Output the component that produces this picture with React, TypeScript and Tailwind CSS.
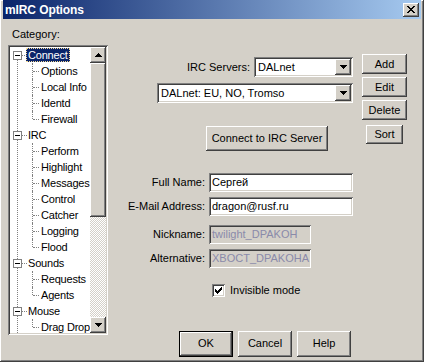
import type { ReactNode } from 'react';

const raised =
  'shadow-[inset_-1px_-1px_#404040,inset_1px_1px_#ffffff,inset_-2px_-2px_#808080,inset_2px_2px_#d4d0c8]';
const sunken =
  'shadow-[inset_1px_1px_#808080,inset_-1px_-1px_#ffffff,inset_2px_2px_#404040,inset_-2px_-2px_#d4d0c8]';

interface TreeNode {
  label: string;
  children: string[];
}

const tree: TreeNode[] = [
  { label: 'Connect', children: ['Options', 'Local Info', 'Identd', 'Firewall'] },
  {
    label: 'IRC',
    children: ['Perform', 'Highlight', 'Messages', 'Control', 'Catcher', 'Logging', 'Flood'],
  },
  { label: 'Sounds', children: ['Requests', 'Agents'] },
  { label: 'Mouse', children: ['Drag Drop'] },
];

function ArrowDown() {
  return (
    <svg width="7" height="4" shapeRendering="crispEdges">
      <path d="M0 0h7v1H0zM1 1h5v1H1zM2 2h3v1H2zM3 3h1v1H3z" fill="#000" />
    </svg>
  );
}

function ArrowUp() {
  return (
    <svg width="7" height="4" shapeRendering="crispEdges">
      <path d="M3 0h1v1H3zM2 1h3v1H2zM1 2h5v1H1zM0 3h7v1H0z" fill="#000" />
    </svg>
  );
}

function Button({
  children,
  className = '',
  isDefault = false,
}: {
  children: ReactNode;
  className?: string;
  isDefault?: boolean;
}) {
  if (isDefault) {
    return (
      <div className={`border border-black flex ${className}`}>
        <div className={`flex-1 flex items-center justify-center bg-[#d4d0c8] ${raised}`}>
          {children}
        </div>
      </div>
    );
  }
  return (
    <div className={`flex items-center justify-center bg-[#d4d0c8] ${raised} ${className}`}>
      {children}
    </div>
  );
}

function Select({ value, className = '' }: { value: string; className?: string }) {
  return (
    <div className={`flex items-stretch bg-white p-[2px] h-[20px] ${sunken} ${className}`}>
      <span className="flex-1 pl-[2px] leading-[16px] truncate">{value}</span>
      <span className={`w-[16px] flex items-center justify-center bg-[#d4d0c8] ${raised}`}>
        <ArrowDown />
      </span>
    </div>
  );
}

function Field({ value, disabled = false }: { value: string; disabled?: boolean }) {
  return (
    <div
      className={`h-[19px] pl-[3px] leading-[19px] truncate ${sunken} ${
        disabled ? 'bg-[#d4d0c8] text-[#8a8aaa]' : 'bg-white'
      }`}
    >
      {value}
    </div>
  );
}

function MinusBox() {
  return (
    <span className="absolute left-[3px] top-[4px] w-[9px] h-[9px] border border-[#808080] bg-white flex items-center justify-center">
      <span className="w-[5px] h-px bg-black" />
    </span>
  );
}

function CategoryTree() {
  return (
    <div className={`relative h-[290px] bg-white p-[2px] flex ${sunken}`}>
      <div className="relative flex-1 overflow-hidden tracking-[-0.2px]">
        {/* line joining the root nodes */}
        <span className="absolute left-[7px] top-[8px] bottom-0 border-l border-dotted border-[#808080]" />
        {tree.map((node, ni) => (
          <div key={node.label}>
            <div className="relative h-[16px] flex items-center">
              <span className="absolute left-[12px] top-[8px] w-[5px] border-t border-dotted border-[#808080]" />
              <MinusBox />
              {ni === 0 ? (
                <span className="ml-[16px] h-[14px] px-[1px] bg-[#0a246a] text-white border border-dotted border-[#f5db95] leading-[12px] whitespace-nowrap">
                  {node.label}
                </span>
              ) : (
                <span className="ml-[17px] leading-[14px] px-[1px]">{node.label}</span>
              )}
            </div>
            {node.children.map((child, ci) => {
              const last = ci === node.children.length - 1;
              return (
                <div key={child} className="relative h-[16px] flex items-center">
                  <span
                    className={`absolute left-[22px] top-0 border-l border-dotted border-[#808080] ${
                      last ? 'h-[8px]' : 'h-[16px]'
                    }`}
                  />
                  <span className="absolute left-[23px] top-[8px] w-[6px] border-t border-dotted border-[#808080]" />
                  <span className="ml-[31px] whitespace-nowrap">{child}</span>
                </div>
              );
            })}
          </div>
        ))}
      </div>
      {/* scrollbar */}
      <div className="w-[16px] flex flex-col">
        <div className={`h-[16px] flex items-center justify-center bg-[#d4d0c8] ${raised}`}>
          <ArrowUp />
        </div>
        <div className={`h-[154px] bg-[#d4d0c8] ${raised}`} />
        <div className="flex-1 bg-[repeating-conic-gradient(#ffffff_0_25%,#d4d0c8_0_50%)] bg-[length:2px_2px]" />
        <div className={`h-[16px] flex items-center justify-center bg-[#d4d0c8] ${raised}`}>
          <ArrowDown />
        </div>
      </div>
    </div>
  );
}

function CheckMark() {
  return (
    <svg width="7" height="7" shapeRendering="crispEdges">
      <path
        d="M6 0h1v1H6zM5 1h2v1H5zM0 2h1v1H0zM4 2h3v1H4zM0 3h2v1H0zM3 3h3v1H3zM0 4h5v1H0zM1 5h3v1H1zM2 6h1v1H2z"
        fill="#000"
      />
    </svg>
  );
}

function CloseGlyph() {
  return (
    <svg width="8" height="7" shapeRendering="crispEdges">
      <path
        d="M0 0h2v1H0zM6 0h2v1H6zM1 1h2v1H1zM5 1h2v1H5zM2 2h4v1H2zM3 3h2v1H3zM2 4h4v1H2zM1 5h2v1H1zM5 5h2v1H5zM0 6h2v1H0zM6 6h2v1H6z"
        fill="#000"
      />
    </svg>
  );
}

export default function App() {
  return (
    <div
      className={`w-[424px] h-[362px] bg-[#d4d0c8] px-[3px] pb-[3px] flex flex-col text-[11px] text-black font-['Liberation_Sans',Arial,sans-serif] ${raised}`}
    >
      {/* title bar */}
      <div className="h-[19px] flex items-center bg-[linear-gradient(90deg,#0a246a,#a6caf0)]">
        <span className="ml-[2px] font-bold text-white text-[12px] tracking-[-0.1px]">mIRC Options</span>
        <div className={`ml-auto mr-[2px] w-[16px] h-[14px] flex items-center justify-center bg-[#d4d0c8] ${raised}`}>
          <CloseGlyph />
        </div>
      </div>

      <div className="flex-1 flex">
        {/* left: category tree */}
        <div className="w-[105px] pl-[5px]">
          <div className="pl-[4px] pt-[9px] h-[22px] leading-[13px]">Category:</div>
          <div className="mt-[4px]">
            <CategoryTree />
          </div>
        </div>

        {/* right: settings */}
        <div className="flex">
          <div className="w-[245px] flex flex-col">
            <div className="mt-[38px] flex items-center justify-end gap-[4px]">
              <span>IRC Servers:</span>
              <Select value="DALnet" className="w-[99px]" />
            </div>
            <Select value="DALnet: EU, NO, Tromso" className="mt-[6px] w-[196px] self-end" />

            <Button className="mt-[23px] ml-[98px] w-[122px] h-[25px]">Connect to IRC Server</Button>

            <div className="mt-[22px] flex items-center">
              <span className="w-[97px] text-right">Full Name:</span>
              <div className="ml-[4px] w-[144px]">
                <Field value="Сергей" />
              </div>
            </div>
            <div className="mt-[5px] flex items-center">
              <span className="w-[97px] text-right">E-Mail Address:</span>
              <div className="ml-[4px] w-[144px]">
                <Field value="dragon@rusf.ru" />
              </div>
            </div>
            <div className="mt-[9px] flex items-center">
              <span className="w-[97px] text-right">Nickname:</span>
              <div className="ml-[4px] w-[102px]">
                <Field value="twilight_DPAKOH" disabled />
              </div>
            </div>
            <div className="mt-[5px] flex items-center">
              <span className="w-[97px] text-right">Alternative:</span>
              <div className="ml-[4px] w-[102px]">
                <Field value="XBOCT_DPAKOHA" disabled />
              </div>
            </div>

            <div className="mt-[14px] ml-[104px] flex items-center gap-[5px]">
              <span className={`w-[13px] h-[13px] bg-white flex items-center justify-center ${sunken}`}>
                <CheckMark />
              </span>
              <span>Invisible mode</span>
            </div>

            <div className="mt-[32px] ml-[71px] flex gap-[5px]">
              <Button isDefault className="w-[54px] h-[26px]">
                OK
              </Button>
              <Button className="w-[54px] h-[26px]">Cancel</Button>
              <Button className="w-[54px] h-[26px]">Help</Button>
            </div>
          </div>

          <div className="ml-[9px] w-[45px] flex flex-col">
            <Button className="mt-[35px] h-[20px]">Add</Button>
            <Button className="mt-[3px] h-[20px]">Edit</Button>
            <Button className="mt-[3px] h-[20px]">Delete</Button>
            <Button className="mt-[5px] h-[19px] w-[37px] self-center">Sort</Button>
          </div>
        </div>
      </div>
    </div>
  );
}
